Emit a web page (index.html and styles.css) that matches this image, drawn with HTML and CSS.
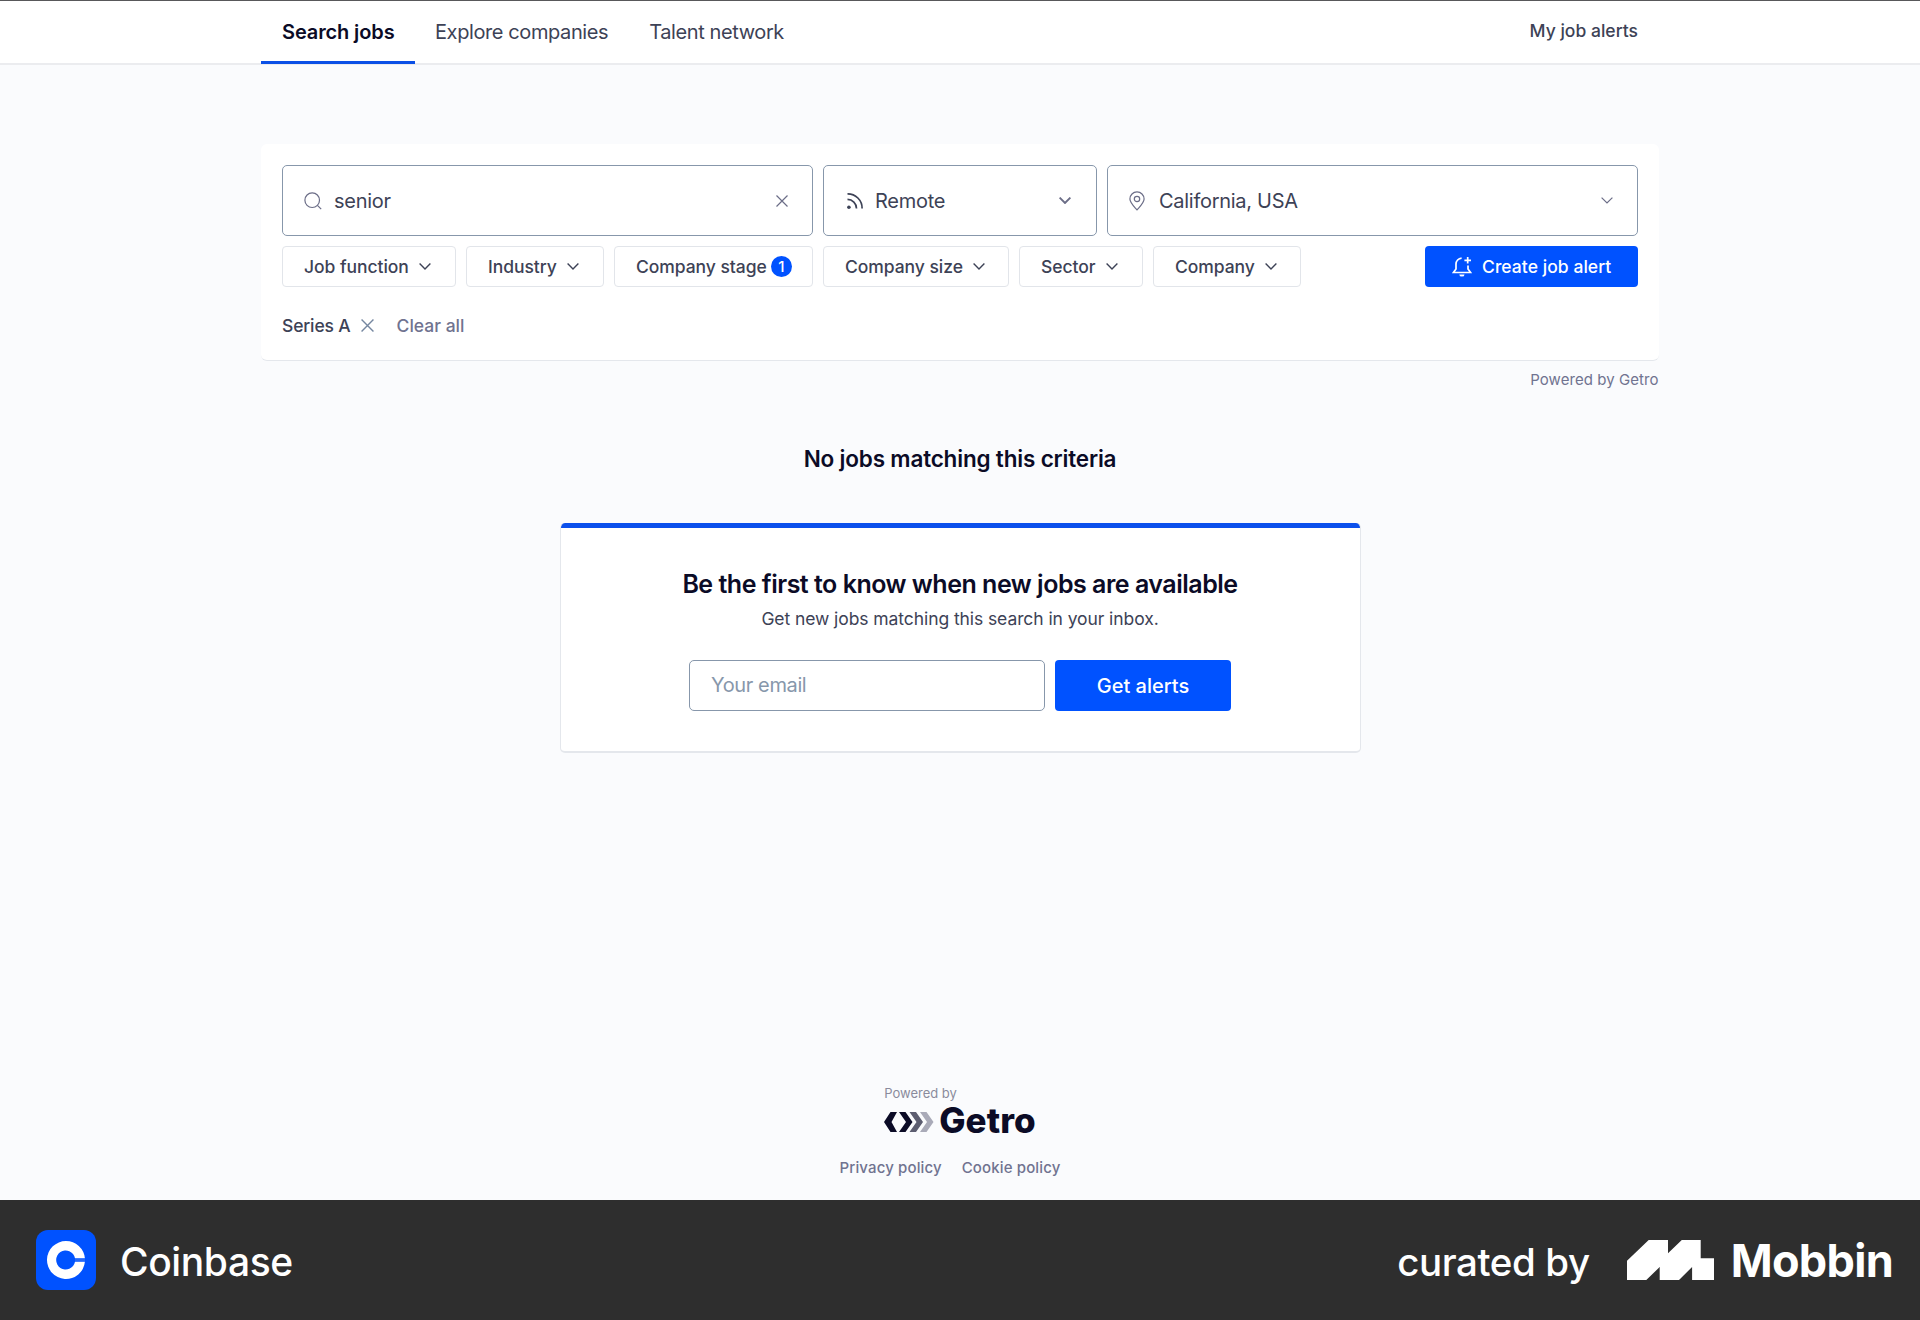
FILE: index.html
```html
<!DOCTYPE html>
<html lang="en">
<head>
<meta charset="utf-8">
<title>Search jobs</title>
<link rel="stylesheet" href="styles.css">
</head>
<body>
<svg class="defs" aria-hidden="true">
  <symbol id="chevron" viewBox="0 0 12 7"><path d="M.6.6 6 6 11.4.6"/></symbol>
  <symbol id="cross" viewBox="0 0 12 12"><path d="M.5.5l11 11M11.5.5l-11 11"/></symbol>
</svg>

<header class="topbar">
  <nav class="tabs">
    <a class="tab tab-active">Search jobs</a>
    <a class="tab">Explore companies</a>
    <a class="tab">Talent network</a>
  </nav>
  <a class="my-alerts">My job alerts</a>
</header>

<main class="page">
  <section class="search-card">
    <div class="fields">
      <div class="field">
        <svg class="field-icon" width="18" height="18" viewBox="0 0 18 18"><circle cx="8.2" cy="8.2" r="7.3"/><path d="M13.4 13.4l3.8 3.8"/></svg>
        <span class="field-text text-query">senior</span>
        <svg class="field-clear" width="12" height="12"><use href="#cross"/></svg>
      </div>
      <div class="field field-remote">
        <svg class="field-icon icon-dark" width="18" height="18" viewBox="0 0 18 18"><path d="M1.5 1.8a14.4 14.4 0 0 1 14.6 14.6M1.5 7.4a9 9 0 0 1 9 9"/><circle class="dot" cx="2.9" cy="15.2" r="1.8"/></svg>
        <span class="field-text">Remote</span>
        <svg class="field-chevron chevron-bold" width="12" height="7"><use href="#chevron"/></svg>
      </div>
      <div class="field field-location">
        <svg class="field-icon" width="18" height="20" viewBox="0 0 18 20"><path d="M9 18.900C5.600 15 1.900 11.600 1.900 8a7.100 7.100 0 0 1 14.200 0c0 3.600-3.700 7-7.100 10.900z"/><circle cx="9" cy="8" r="2.700"/></svg>
        <span class="field-text">California, USA</span>
        <svg class="field-chevron" width="12" height="7"><use href="#chevron"/></svg>
      </div>
    </div>

    <div class="filters">
      <button class="filter w-function">Job function<svg width="12" height="7"><use href="#chevron"/></svg></button>
      <button class="filter w-industry">Industry<svg width="12" height="7"><use href="#chevron"/></svg></button>
      <button class="filter w-stage">Company stage<span class="badge">1</span></button>
      <button class="filter w-size">Company size<svg width="12" height="7"><use href="#chevron"/></svg></button>
      <button class="filter w-sector">Sector<svg width="12" height="7"><use href="#chevron"/></svg></button>
      <button class="filter w-company">Company<svg width="12" height="7"><use href="#chevron"/></svg></button>
      <button class="create-alert">
        <svg width="20" height="21" viewBox="0 0 20 21"><path d="M9.600 2.100A6 6 0 0 0 4 8.100V13l-2.600 3.500h17.200L16 13V9.500M15.700 1v6.600M12.400 4.300H19"/><path class="clapper" d="M7.300 18.400h5.200a2.600 2.200 0 0 1-5.200 0z"/></svg>
        Create job alert
      </button>
    </div>

    <div class="applied">
      <span class="applied-name">Series A</span>
      <svg width="13" height="13"><use href="#cross"/></svg>
      <a class="clear-all">Clear all</a>
    </div>
  </section>
  <p class="powered">Powered by Getro</p>

  <h2 class="empty-title">No jobs matching this criteria</h2>

  <section class="signup">
    <h3>Be the first to know when new jobs are available</h3>
    <p>Get new jobs matching this search in your inbox.</p>
    <div class="signup-form">
      <div class="email">Your email</div>
      <button class="get-alerts">Get alerts</button>
    </div>
  </section>
</main>

<footer class="site-footer">
  <div class="getro">
    <span class="getro-by">Powered by</span>
    <div class="getro-brand">
      <svg width="50" height="20" viewBox="0 0 50 20">
        <path class="c3" d="M36 0h6.500L49.500 10l-7 10H36l7-10z"/>
        <path class="c2" d="M25.500 0H32l7 10-7 10h-6.500l7-10z"/>
        <path class="c1" d="M15 0h6.500l7 10-7 10H15l7-10zM13 0H6.500L0 10l6.500 10H13L7.500 10z"/>
      </svg>
      <span>Getro</span>
    </div>
  </div>
  <div class="links"><a>Privacy policy</a><a>Cookie policy</a></div>
</footer>

<div class="credit">
  <svg width="60" height="60" viewBox="0 0 60 60"><rect width="60" height="60" rx="12" fill="#0052ff"/><path d="M30 11a19 19 0 1 0 18.900 20.800H39a9.500 9.500 0 1 1 0-3.600h9.900A19 19 0 0 0 30 11z" fill="#fff"/><path d="M39 30h10" stroke="#4a80ee" stroke-width="1"/></svg>
  <span class="credit-app">Coinbase</span>
  <span class="credit-by">curated by</span>
  <svg width="87" height="40" viewBox="0 0 87 40"><path fill="#fff" d="M0 20.700 21.700 0H41v13.300L54.800 0h18.900v18.300H87V40H65.100V27L52 40H32.700V27L19.300 40H0z"/></svg>
  <span class="credit-brand">Mobbin</span>
</div>
</body>
</html>
```
FILE: styles.css
```css
* { box-sizing: border-box; }

body {
  margin: 0;
  height: 1320px;
  display: flex;
  flex-direction: column;
  background: #fafbfd;
  color: #3d4256;
  font-family: Inter, "Liberation Sans", sans-serif;
  white-space: nowrap;
}

.defs { display: none; }
svg { display: block; flex: none; fill: none; stroke: currentColor; }
h2, h3, p { margin: 0; }
button { margin: 0; padding: 0; font: inherit; }

/* Top navigation */
.topbar {
  height: 65px;
  flex: none;
  display: flex;
  justify-content: space-between;
  padding: 0 282px 0 261px;
  background: #fff;
  border-top: 1px solid #58585a;
  border-bottom: 2px solid #ebecef;
}
.tabs { display: flex; }
.tab {
  height: 63px;
  padding: 0 21px 0 20px;
  border-bottom: 3px solid transparent;
  font-size: 20px;
  line-height: 62px;
  letter-spacing: -.4px;
}
.tab-active {
  width: 154px;
  padding-left: 21px;
  border-color: #0b50e6;
  color: #0b0b26;
  font-weight: 600;
  letter-spacing: -.12px;
}
.my-alerts { font-size: 17.500px; font-weight: 500; letter-spacing: .02px; line-height: 59px; }

/* Search card */
.page { flex: 1; display: flex; flex-direction: column; align-items: center; padding-top: 79px; }
.search-card {
  width: 1398px;
  height: 217px;
  padding: 21px 21px 0;
  display: flex;
  flex-direction: column;
  background: #fff;
  border-bottom: 1px solid #e4e7ec;
  border-radius: 6px;
}
.fields { display: grid; grid-template-columns: 531px 274px 531px; gap: 10px; }
.field {
  height: 71px;
  display: flex;
  align-items: center;
  padding: 0 24px 0 21px;
  border: 1px solid #8797ab;
  border-radius: 5px;
  background: #fff;
}
.field-icon { color: #6b6d87; margin-right: 12px; stroke-width: 1.200; }
.icon-dark { color: #3d4256; stroke-width: 1.700; margin: 0 11px 0 1px; }
.dot { fill: currentColor; stroke: none; }
.field-text { flex: 1; font-size: 20px; letter-spacing: -.28px; padding-top: 1px; }
.field-clear, .field-chevron { color: #6b6d87; stroke-width: 1.200; }
.field-chevron { margin-right: 1px; }
.field-location .field-chevron { margin-right: 0; }
.field-location { padding-left: 20px; }
.field-location .field-icon { margin-right: 13px; }
.chevron-bold { stroke-width: 1.900; }

.filters { display: flex; gap: 10px; margin-top: 10px; }
.filter {
  height: 41px;
  display: flex;
  align-items: center;
  gap: 10px;
  padding-left: 21px;
  border: 1px solid #e2e5ea;
  border-radius: 4px;
  background: #fff;
  color: #3d4256;
  font-size: 17.500px;
  font-weight: 500;
  letter-spacing: -.05px;
}
.filter svg { stroke-width: 1.400; }
.w-function { width: 174px; }
.w-industry { width: 138px; }
.w-stage { width: 199px; gap: 4px; }
.w-size { width: 186px; }
.w-sector { width: 124px; }
.w-company { width: 148px; }
.badge {
  width: 21px;
  height: 21px;
  border-radius: 50%;
  background: #0052ff;
  color: #fff;
  font-size: 15px;
  line-height: 21px;
  text-align: center;
}
.create-alert {
  width: 213px;
  height: 41px;
  margin-left: auto;
  display: flex;
  align-items: center;
  gap: 10px;
  padding-left: 27px;
  border: 0;
  border-radius: 4px;
  background: #0052ff;
  color: #fff;
  font-size: 17.500px;
  font-weight: 500;
  letter-spacing: .05px;
}
.create-alert svg { stroke-width: 1.700; }
.clapper { fill: currentColor; stroke: none; }

.applied { height: 20px; display: flex; align-items: center; margin-top: 28px; font-size: 17.500px; font-weight: 500; }
.applied-name { letter-spacing: -.15px; }
.applied svg { margin-left: 10px; color: #7587a0; stroke-width: 1.300; }
.clear-all { margin-left: 23px; color: #707390; }
.powered {
  width: 1397px;
  margin-top: 9px;
  text-align: right;
  font-size: 15px;
  line-height: 20px;
  letter-spacing: .06px;
  color: #707390;
}

/* Empty state */
.empty-title { margin-top: 53px; font-size: 22.500px; font-weight: 600; line-height: 32px; letter-spacing: -.18px; color: #0b0b26; }
.signup {
  width: 801px;
  height: 230px;
  margin-top: 48px;
  padding-top: 40px;
  display: flex;
  flex-direction: column;
  align-items: center;
  background: linear-gradient(#0b50ec 5px, #fff 5px);
  border: 1px solid #e4e7ec;
  border-width: 0 1px 2px;
  border-radius: 5px;
}
.signup h3 { font-size: 25px; font-weight: 600; line-height: 42px; letter-spacing: -.49px; color: #0b0b26; }
.signup p { margin-top: 2px; font-size: 17.500px; line-height: 24px; letter-spacing: -.08px; }
.signup-form { display: flex; gap: 10px; margin-top: 29px; }
.email {
  width: 356px;
  height: 51px;
  padding-left: 21px;
  border: 1px solid #8797ab;
  border-radius: 5px;
  color: #8797ab;
  font-size: 20px;
  line-height: 49px;
  letter-spacing: -.38px;
}
.get-alerts {
  width: 176px;
  height: 51px;
  border: 0;
  border-radius: 4px;
  background: #0052ff;
  color: #fff;
  font-size: 20px;
  font-weight: 500;
}

/* Site footer */
.site-footer { height: 120px; flex: none; display: flex; flex-direction: column; align-items: center; }
.getro { display: flex; flex-direction: column; margin-top: 5px; color: #0b0b26; }
.getro-by { font-size: 13px; line-height: 16px; color: #8a8b9c; }
.getro-brand { display: flex; align-items: center; gap: 5px; height: 37px; font-size: 35px; font-weight: 800; letter-spacing: .1px; }
.getro-brand svg { stroke: none; margin-top: 5px; }
.c1 { fill: #0b0b26; }
.c2 { fill: #5c5d70; }
.c3 { fill: #a9aab8; }
.links { display: flex; gap: 20px; margin: 20px 20px 0 0; font-size: 15px; font-weight: 500; line-height: 20px; letter-spacing: .13px; color: #707390; }

/* Credit strip */
.credit {
  height: 120px;
  flex: none;
  display: flex;
  align-items: center;
  padding: 0 27px 0 36px;
  background: #2e2e2e;
  color: #fff;
}
.credit svg { stroke: none; }
.credit-app { margin-left: 24px; padding-top: 3px; font-size: 39px; font-weight: 500; letter-spacing: -.4px; }
.credit-by { margin: 0 37px 0 auto; padding-top: 4px; font-size: 38.500px; font-weight: 500; letter-spacing: -.4px; }
.credit-brand { margin-left: 17px; font-size: 45px; font-weight: 700; letter-spacing: -.7px; }
```
